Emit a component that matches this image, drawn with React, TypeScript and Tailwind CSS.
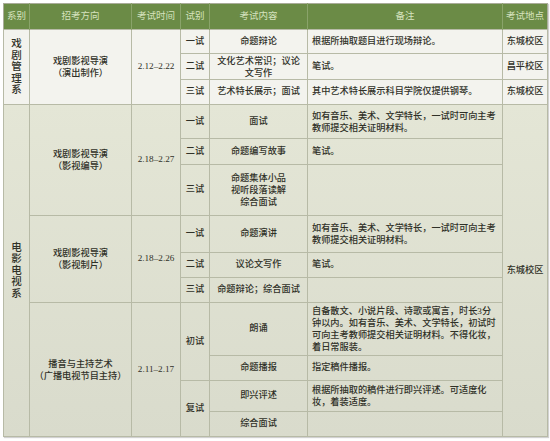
import type { ReactNode } from "react";

const cell = "border border-[#b7baa6] px-1 text-center align-middle";
const place = "border border-[#b7baa6] px-0 text-center align-middle whitespace-nowrap";
const note = "border border-[#b7baa6] pl-[4px] pr-[3px] text-left align-middle";

function Vertical({ text }: { text: string }) {
  return (
    <div className="flex flex-col items-center text-[10.5px] leading-[11.5px]">
      {text.split("").map((c, i) => (
        <span key={i}>{c}</span>
      ))}
    </div>
  );
}

function Lines({ children }: { children: ReactNode }) {
  return <div className="leading-[12px]">{children}</div>;
}

export default function App() {
  return (
    <div className="min-h-[441px] bg-white pl-[3px] pt-[3px] font-['Liberation_Serif','Noto_Sans_CJK_SC',serif] text-[9.2px] font-medium text-[#303128]">
      <table className="w-[544px] table-fixed border-collapse border border-[#a9ac99] shadow-[1px_1px_1px_rgba(0,0,0,0.18)]">
        <colgroup>
          <col className="w-[26px]" />
          <col className="w-[102px]" />
          <col className="w-[49px]" />
          <col className="w-[29px]" />
          <col className="w-[98px]" />
          <col className="w-[195px]" />
          <col className="w-[45px]" />
        </colgroup>
        <thead>
          <tr className="h-[26px] bg-[#6b8b46] text-[9.5px] text-[#d6e2bf]">
            <th className="border-r border-[#8aa36a] font-normal">系别</th>
            <th className="border-r border-[#8aa36a] font-normal">招考方向</th>
            <th className="border-r border-[#8aa36a] font-normal">考试时间</th>
            <th className="border-r border-[#8aa36a] font-normal">试别</th>
            <th className="border-r border-[#8aa36a] font-normal">考试内容</th>
            <th className="border-r border-[#8aa36a] font-normal">备注</th>
            <th className="whitespace-nowrap font-normal">考试地点</th>
          </tr>
        </thead>
        <tbody className="bg-[#f3f3ee]">
          <tr className="h-[24px]">
            <td rowSpan={3} className={cell}>
              <Vertical text="戏剧管理系" />
            </td>
            <td rowSpan={3} className={cell}>
              <Lines>
                戏剧影视导演
                <br />（演出制作）
              </Lines>
            </td>
            <td rowSpan={3} className={cell}>2.12–2.22</td>
            <td className={cell}>一试</td>
            <td className={cell}>命题辩论</td>
            <td className={note}>根据所抽取题目进行现场辩论。</td>
            <td className={place}>东城校区</td>
          </tr>
          <tr className="h-[26px]">
            <td className={cell}>二试</td>
            <td className={cell}>
              <Lines>
                文化艺术常识；议论
                <br />
                文写作
              </Lines>
            </td>
            <td className={note}>笔试。</td>
            <td className={place}>昌平校区</td>
          </tr>
          <tr className="h-[25px]">
            <td className={cell}>三试</td>
            <td className={cell}>艺术特长展示；面试</td>
            <td className={note}>其中艺术特长展示科目学院仅提供钢琴。</td>
            <td className={place}>东城校区</td>
          </tr>
        </tbody>
        <tbody className="bg-linear-to-b from-[#e4e6d6] to-[#d9dbcc]">
          <tr className="h-[34px]">
            <td rowSpan={10} className={cell}>
              <Vertical text="电影电视系" />
            </td>
            <td rowSpan={3} className={cell}>
              <Lines>
                戏剧影视导演
                <br />（影视编导）
              </Lines>
            </td>
            <td rowSpan={3} className={cell}>2.18–2.27</td>
            <td className={cell}>一试</td>
            <td className={cell}>面试</td>
            <td className={note}>
              <Lines>
                如有音乐、美术、文学特长，一试时可向主考
                <br />
                教师提交相关证明材料。
              </Lines>
            </td>
            <td rowSpan={10} className={place}>东城校区</td>
          </tr>
          <tr className="h-[26px]">
            <td className={cell}>二试</td>
            <td className={cell}>命题编写故事</td>
            <td className={note}>笔试。</td>
          </tr>
          <tr className="h-[51px]">
            <td className={cell}>三试</td>
            <td className={cell}>
              <Lines>
                命题集体小品
                <br />
                视听段落读解
                <br />
                综合面试
              </Lines>
            </td>
            <td className={note}></td>
          </tr>
          <tr className="h-[37px]">
            <td rowSpan={3} className={cell}>
              <Lines>
                戏剧影视导演
                <br />（影视制片）
              </Lines>
            </td>
            <td rowSpan={3} className={cell}>2.18–2.26</td>
            <td className={cell}>一试</td>
            <td className={cell}>命题演讲</td>
            <td className={note}>
              <Lines>
                如有音乐、美术、文学特长，一试时可向主考
                <br />
                教师提交相关证明材料。
              </Lines>
            </td>
          </tr>
          <tr className="h-[25px]">
            <td className={cell}>二试</td>
            <td className={cell}>议论文写作</td>
            <td className={note}>笔试。</td>
          </tr>
          <tr className="h-[25px]">
            <td className={cell}>三试</td>
            <td className={cell}>命题辩论；综合面试</td>
            <td className={note}></td>
          </tr>
          <tr className="h-[53px]">
            <td rowSpan={4} className={cell}>
              <Lines>
                播音与主持艺术
                <br />（广播电视节目主持）
              </Lines>
            </td>
            <td rowSpan={4} className={cell}>2.11–2.17</td>
            <td rowSpan={2} className={cell}>初试</td>
            <td className={cell}>朗诵</td>
            <td className={note}>
              <Lines>
                自备散文、小说片段、诗歌或寓言，时长3分
                <br />
                钟以内。如有音乐、美术、文学特长，初试时
                <br />
                可向主考教师提交相关证明材料。不得化妆，
                <br />
                着日常服装。
              </Lines>
            </td>
          </tr>
          <tr className="h-[25px]">
            <td className={cell}>命题播报</td>
            <td className={note}>指定稿件播报。</td>
          </tr>
          <tr className="h-[31px]">
            <td rowSpan={2} className={cell}>复试</td>
            <td className={cell}>即兴评述</td>
            <td className={note}>
              <Lines>
                根据所抽取的稿件进行即兴评述。可适度化
                <br />
                妆，着装适度。
              </Lines>
            </td>
          </tr>
          <tr className="h-[25px]">
            <td className={cell}>综合面试</td>
            <td className={note}></td>
          </tr>
        </tbody>
      </table>
    </div>
  );
}
